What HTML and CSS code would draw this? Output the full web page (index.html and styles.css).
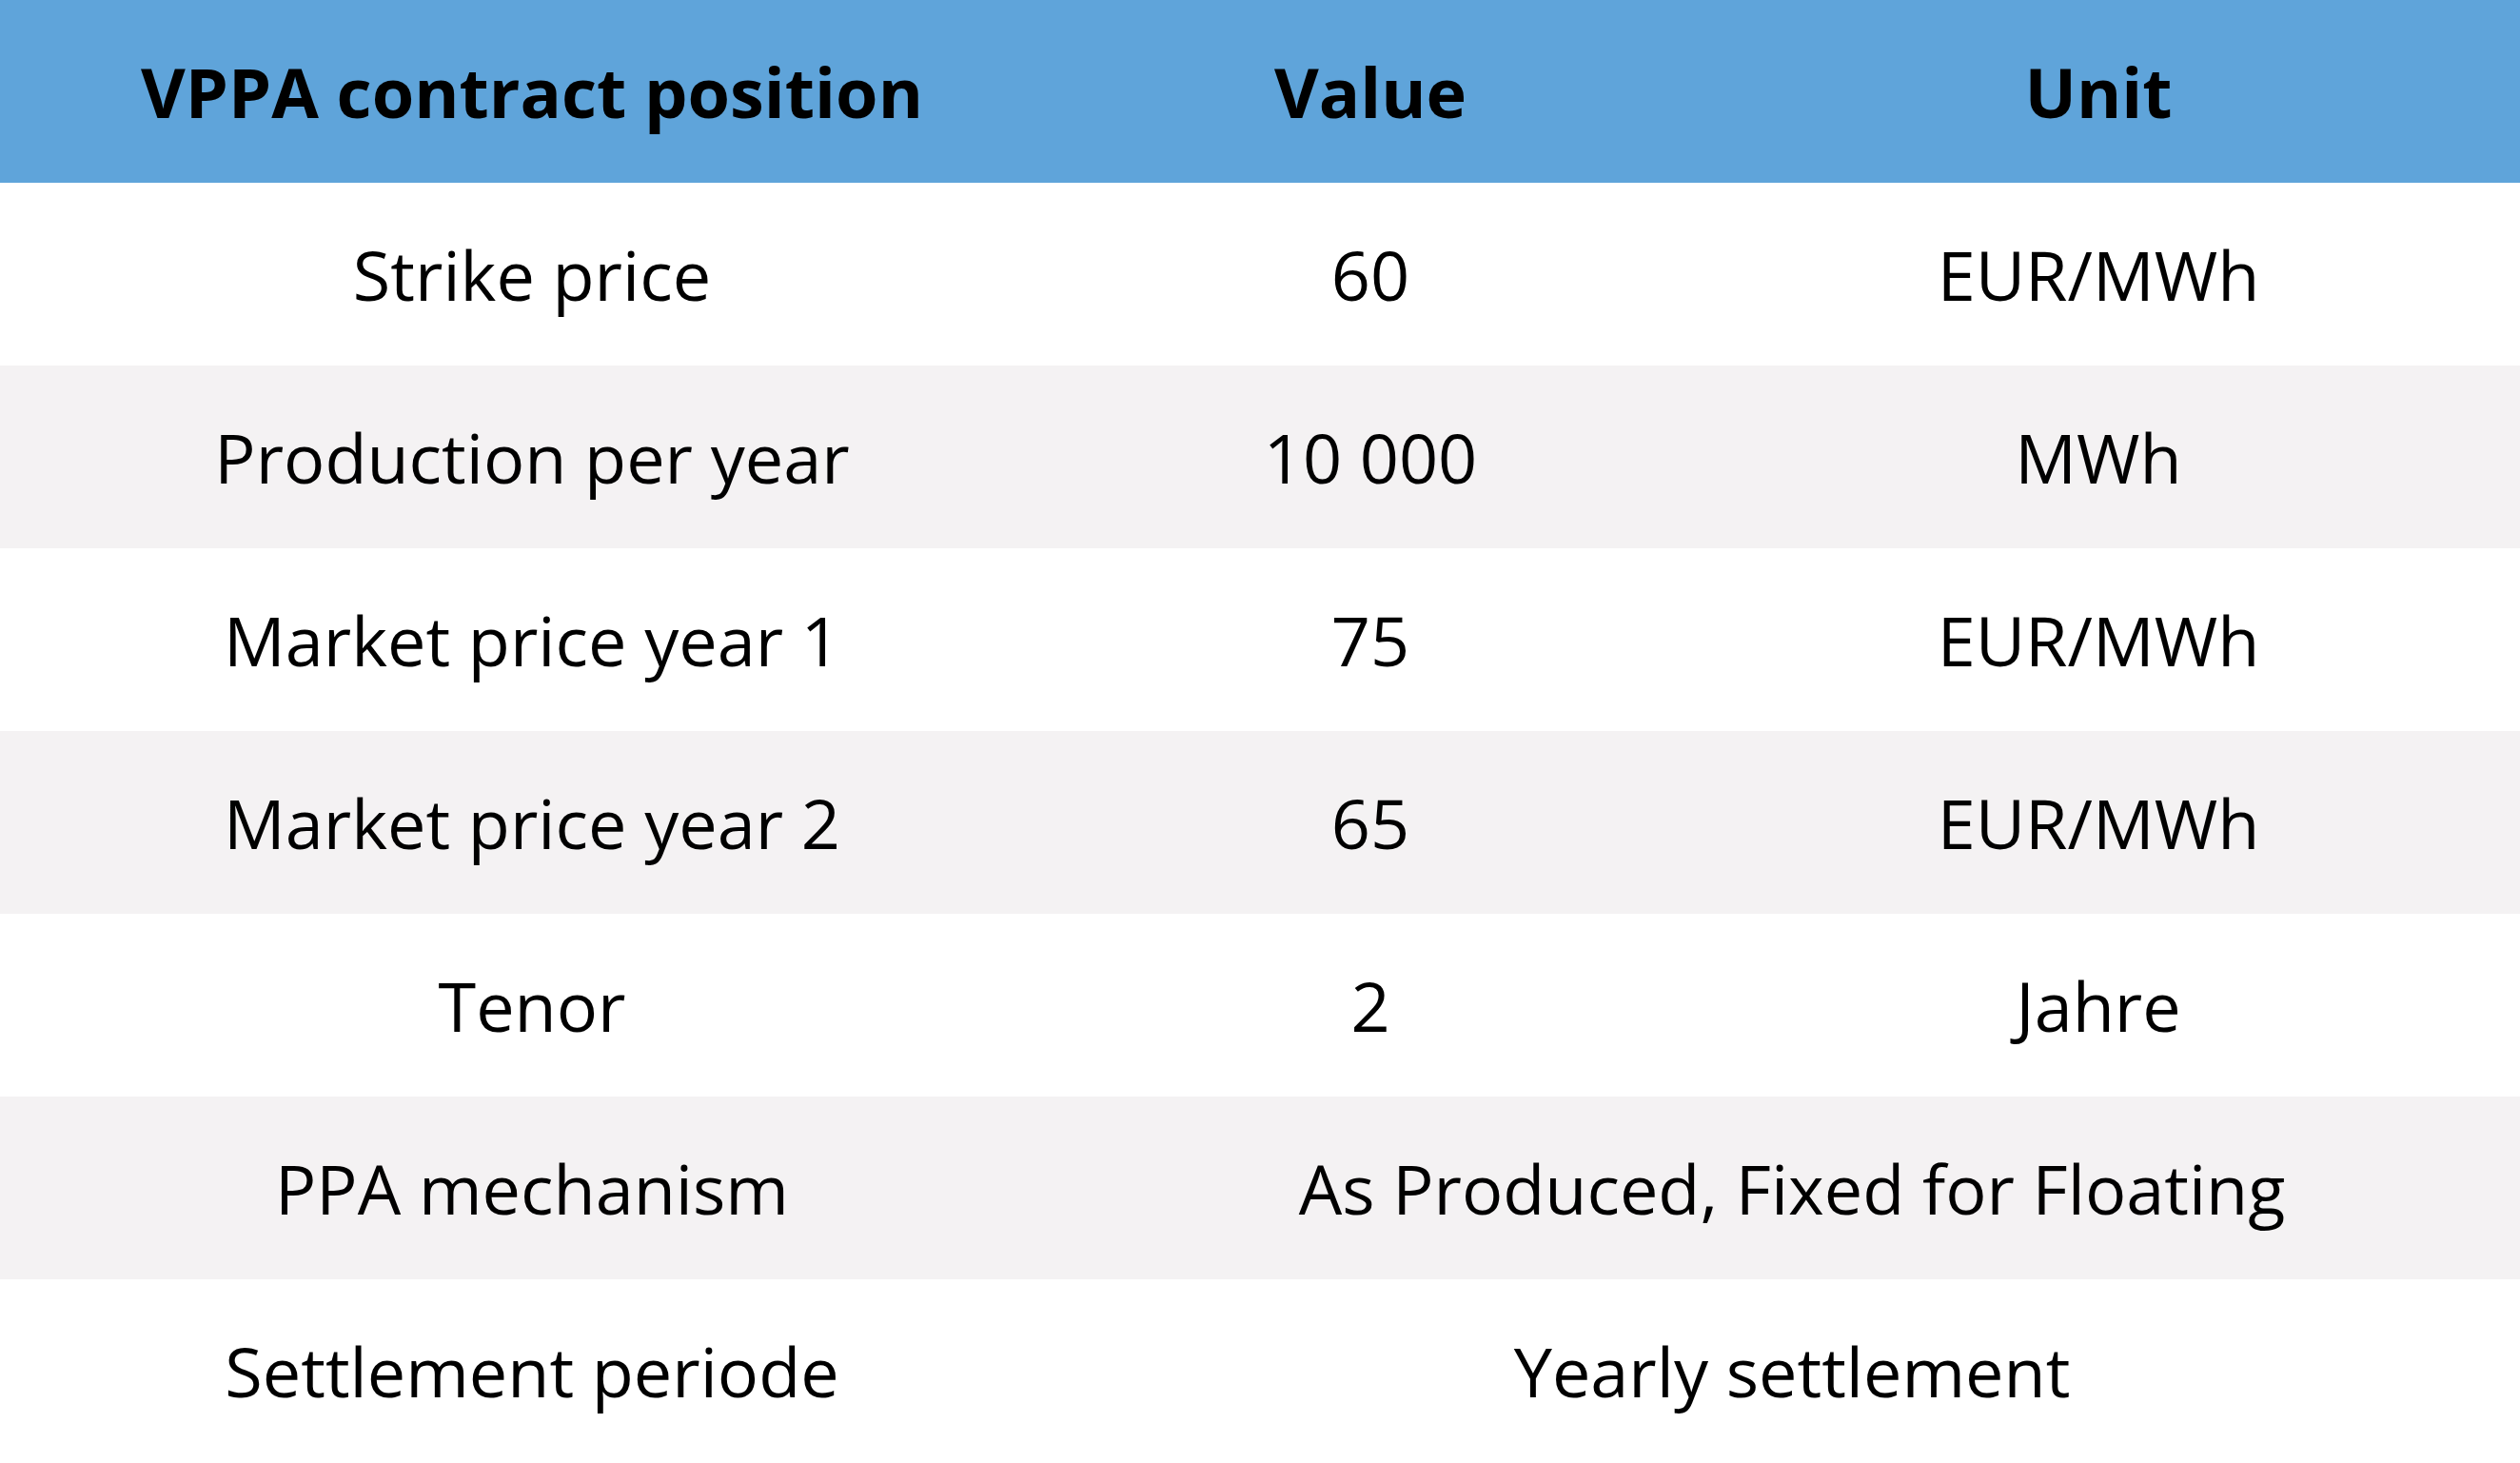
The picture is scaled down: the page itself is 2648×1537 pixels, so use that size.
FILE: index.html
```html
<!DOCTYPE html>
<html lang="en">
<head>
<meta charset="utf-8">
<title>VPPA contract</title>
<link rel="stylesheet" href="styles.css">
</head>
<body>
<table class="ppa">
  <colgroup>
    <col class="c1"><col class="c2"><col class="c3">
  </colgroup>
  <thead>
    <tr><th>VPPA contract position</th><th>Value</th><th>Unit</th></tr>
  </thead>
  <tbody>
    <tr><td>Strike price</td><td>60</td><td>EUR/MWh</td></tr>
    <tr class="alt"><td>Production per year</td><td>10 000</td><td>MWh</td></tr>
    <tr><td>Market price year 1</td><td>75</td><td>EUR/MWh</td></tr>
    <tr class="alt"><td>Market price year 2</td><td>65</td><td>EUR/MWh</td></tr>
    <tr><td>Tenor</td><td>2</td><td>Jahre</td></tr>
    <tr class="alt"><td>PPA mechanism</td><td colspan="2">As Produced, Fixed for Floating</td></tr>
    <tr><td>Settlement periode</td><td colspan="2">Yearly settlement</td></tr>
  </tbody>
</table>
</body>
</html>
```
FILE: styles.css
```css
html, body {
  margin: 0;
  padding: 0;
  background: #ffffff;
}
.ppa {
  width: 2648px;
  border-collapse: collapse;
  table-layout: fixed;
  font-family: "Open Sans", "Liberation Sans", sans-serif;
  font-size: 72px;
  color: #000000;
}
.c1 { width: 1118px; }
.c2 { width: 644px; }
.c3 { width: 886px; }
.ppa th,
.ppa td {
  height: 192px;
  padding: 0;
  text-align: center;
  vertical-align: middle;
  white-space: nowrap;
}
.ppa th {
  background: #5fa4da;
  font-weight: 700;
}
.ppa tr.alt td {
  background: #f4f2f3;
}
```
